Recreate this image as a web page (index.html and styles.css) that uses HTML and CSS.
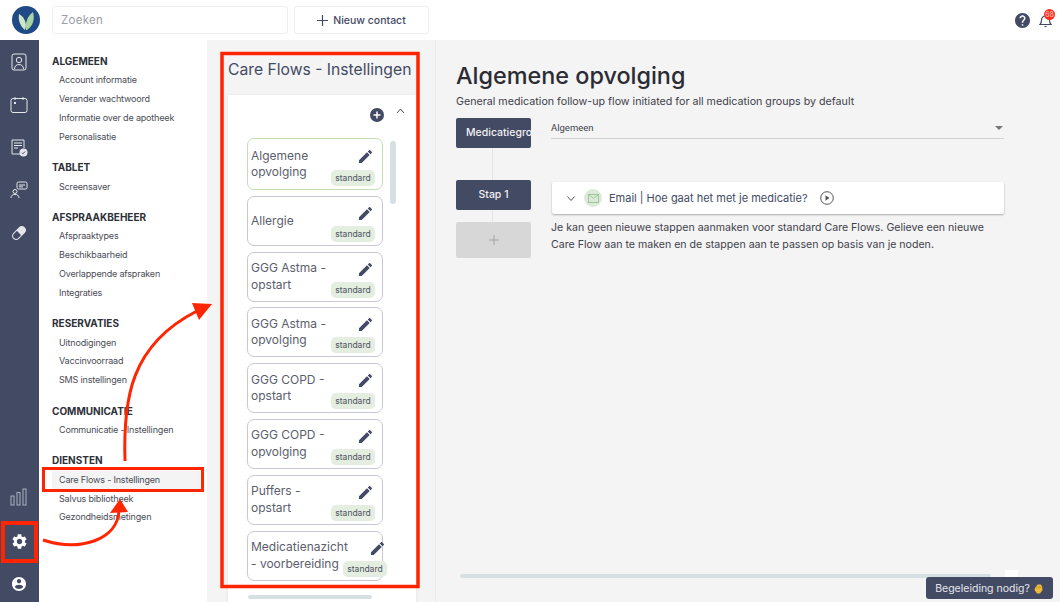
FILE: index.html
```html
<!DOCTYPE html>
<html lang="en">
<head>
    <meta charset="UTF-8">
    <meta name="viewport" content="width=device-width, initial-scale=1.0">
    <title>Care Flows - Instellingen</title>
    <link rel="stylesheet" href="styles.css">
</head>
<body>
    <!-- Top bar -->
    <header class="topbar">
        <div class="logo">
            <svg width="28" height="28" viewBox="0 0 28 28">
                <circle cx="14" cy="14" r="14" fill="#1f4a86"></circle>
                <path d="M13 24C8 20 6 14 7 8c4 2 7 7 7 12z" fill="#cfe6c8"></path>
                <path d="M14 24c-1-6 1-14 7-18 2 7 0 14-6 18z" fill="#a9d3a2"></path>
            </svg>
        </div>
        <div class="search">Zoeken</div>
        <button class="new-contact">
            <svg width="11" height="11" viewBox="0 0 11 11"><path d="M5.500 0v11M0 5.500h11" stroke="#434a63" stroke-width="1.200"></path></svg>
            Nieuw contact
        </button>
        <div class="topbar-right">
            <svg class="help-icon" width="15" height="15" viewBox="2 2 20 20"><path fill="#434a63" d="M12 2C6.480 2 2 6.480 2 12s4.480 10 10 10 10-4.480 10-10S17.520 2 12 2zm1 17h-2v-2h2v2zm2.070-7.750l-.9.920C13.450 12.900 13 13.500 13 15h-2v-.5c0-1.100.450-2.100 1.170-2.830l1.240-1.260c.370-.360.590-.860.590-1.410 0-1.100-.9-2-2-2s-2 .9-2 2H8c0-2.210 1.790-4 4-4s4 1.790 4 4c0 .880-.360 1.680-.930 2.250z"></path></svg>
            <div class="bell">
                <svg width="13" height="15" viewBox="0 0 13 15" fill="none" stroke="#434a63" stroke-width="1.200"><path d="M1 11.500c1.200-1 1.500-2 1.500-4.500a4 4 0 0 1 8 0c0 2.500.3 3.500 1.500 4.500z"></path><path d="M5.500 13.500h2"></path></svg>
                <span class="badge">68</span>
            </div>
        </div>
    </header>

    <div class="layout">
        <!-- Icon sidebar -->
        <aside class="sidebar">
            <div class="sidebar-group">
                <svg width="18" height="18" viewBox="0 0 18 18" fill="none" stroke="#e4e6ec" stroke-width="1"><rect x="2" y="1" width="14" height="16" rx="2"></rect><circle cx="9" cy="7" r="2.700"></circle><path d="M4.500 16c0-3 2-4.500 4.500-4.500s4.500 1.500 4.500 4.500"></path></svg>
                <svg width="18" height="18" viewBox="0 0 18 18" fill="none" stroke="#e4e6ec" stroke-width="1"><rect x="1" y="2.500" width="16" height="14" rx="2"></rect><path d="M5 1v3M13 1v3"></path><rect x="4" y="6" width="2" height="2" fill="#e4e6ec" stroke="none"></rect></svg>
                <svg width="18" height="18" viewBox="0 0 18 18" fill="none" stroke="#e4e6ec" stroke-width="1"><path d="M11 15H2V1h12v8"></path><path d="M4 4h8M4 6.500h8M4 9h4"></path><circle cx="13.500" cy="13.500" r="4" fill="#e4e6ec" stroke="none"></circle><path d="M12 13.800l1 1 2-2.300" stroke="#434a63"></path></svg>
                <svg width="18" height="18" viewBox="0 0 18 18" fill="none" stroke="#e4e6ec" stroke-width="1"><rect x="7" y="1" width="10" height="7" rx="1.500"></rect><path d="M9 4h6M9 5.800h4"></path><circle cx="5" cy="10.500" r="2"></circle><path d="M1 17c0-2.500 1.500-3.500 4-3.500s4 1 4 3.500"></path></svg>
                <svg width="18" height="18" viewBox="0 0 18 18" fill="none" stroke="#e4e6ec" stroke-width="1"><g transform="rotate(-45 9 9)"><rect x="1.500" y="5.500" width="15" height="7" rx="3.500"></rect><path d="M9 5.500h4a3.500 3.500 0 0 1 0 7H9z" fill="#e4e6ec" stroke="none"></path></g></svg>
            </div>
            <div class="sidebar-group sidebar-bottom">
                <svg width="18" height="18" viewBox="0 0 18 18" fill="none" stroke="#aab0c0" stroke-width="1"><rect x="1" y="8" width="3" height="9"></rect><rect x="7" y="4.500" width="3" height="12.500"></rect><rect x="13" y="1" width="3" height="16"></rect></svg>
                <svg width="15" height="15" viewBox="2 2 20 20"><path fill="#fff" d="M19.140 12.940c.04-.3.06-.61.06-.94 0-.32-.02-.64-.07-.94l2.030-1.580c.18-.14.23-.41.12-.61l-1.920-3.320c-.12-.22-.37-.29-.59-.22l-2.390.96c-.5-.38-1.030-.7-1.620-.94l-.36-2.540c-.04-.24-.24-.41-.48-.41h-3.840c-.24 0-.43.17-.47.41l-.36 2.540c-.59.24-1.130.57-1.620.94l-2.390-.96c-.22-.08-.47 0-.59.22L2.740 8.870c-.12.21-.08.47.12.61l2.030 1.580c-.05.3-.09.63-.09.94s.02.64.07.94l-2.030 1.580c-.18.14-.23.41-.12.61l1.920 3.320c.12.22.37.29.59.22l2.390-.96c.5.38 1.030.7 1.620.94l.36 2.540c.05.24.24.41.48.41h3.840c.24 0 .44-.17.47-.41l.36-2.540c.59-.24 1.130-.56 1.620-.94l2.390.96c.22.08.47 0 .59-.22l1.920-3.320c.12-.22.07-.47-.12-.61l-2.010-1.580zM12 15.600c-1.980 0-3.600-1.620-3.600-3.600s1.620-3.600 3.600-3.600 3.600 1.620 3.600 3.600-1.620 3.600-3.600 3.600z"></path></svg>
                <svg width="14" height="14" viewBox="2 2 20 20"><path fill="#fff" d="M12 2C6.480 2 2 6.480 2 12s4.480 10 10 10 10-4.480 10-10S17.520 2 12 2zm0 3c1.660 0 3 1.340 3 3s-1.340 3-3 3-3-1.340-3-3 1.340-3 3-3zm0 14.200c-2.500 0-4.710-1.280-6-3.220.03-1.990 4-3.080 6-3.080 1.990 0 5.970 1.090 6 3.080-1.290 1.940-3.500 3.220-6 3.220z"></path></svg>
            </div>
        </aside>

        <!-- Settings menu -->
        <nav class="settings-nav">
            <div class="nav-group">
                <h4>ALGEMEEN</h4>
                <a>Account informatie</a>
                <a>Verander wachtwoord</a>
                <a>Informatie over de apotheek</a>
                <a>Personalisatie</a>
            </div>
            <div class="nav-group">
                <h4>TABLET</h4>
                <a>Screensaver</a>
            </div>
            <div class="nav-group">
                <h4>AFSPRAAKBEHEER</h4>
                <a>Afspraaktypes</a>
                <a>Beschikbaarheid</a>
                <a>Overlappende afspraken</a>
                <a>Integraties</a>
            </div>
            <div class="nav-group">
                <h4>RESERVATIES</h4>
                <a>Uitnodigingen</a>
                <a>Vaccinvoorraad</a>
                <a>SMS instellingen</a>
            </div>
            <div class="nav-group">
                <h4>COMMUNICATIE</h4>
                <a>Communicatie - Instellingen</a>
            </div>
            <div class="nav-group">
                <h4>DIENSTEN</h4>
                <a class="active">Care Flows - Instellingen</a>
                <a>Salvus bibliotheek</a>
                <a>Gezondheidsmetingen</a>
            </div>
        </nav>

        <!-- Care flow list -->
        <section class="flows">
            <h2>Care Flows - Instellingen</h2>
            <div class="flows-card">
                <div class="flows-tools">
                    <svg width="14" height="14" viewBox="0 0 14 14"><circle cx="7" cy="7" r="7" fill="#434a63"></circle><path d="M7 3.500v7M3.500 7h7" stroke="#fff" stroke-width="1.500"></path></svg>
                    <svg width="9" height="6" viewBox="0 0 9 6" fill="none" stroke="#555" stroke-width="1"><path d="M1 5l3.500-4L8 5"></path></svg>
                </div>
                <div class="flows-list">
                    <div class="flow selected">
                        <span class="flow-name">Algemene opvolging</span>
                        <svg class="pencil" viewBox="3 3 18 18"><path d="M3 17.250V21h3.750L17.810 9.940l-3.750-3.750L3 17.250zM20.710 7.040c.39-.39.39-1.020 0-1.410l-2.340-2.340c-.39-.39-1.020-.39-1.410 0l-1.830 1.830 3.750 3.750 1.830-1.830z"></path></svg>
                        <span class="tag">standard</span>
                    </div>
                    <div class="flow">
                        <span class="flow-name">Allergie</span>
                        <svg class="pencil" viewBox="3 3 18 18"><path d="M3 17.250V21h3.750L17.810 9.940l-3.750-3.750L3 17.250zM20.710 7.040c.39-.39.39-1.020 0-1.410l-2.340-2.340c-.39-.39-1.020-.39-1.410 0l-1.830 1.830 3.750 3.750 1.830-1.830z"></path></svg>
                        <span class="tag">standard</span>
                    </div>
                    <div class="flow">
                        <span class="flow-name">GGG Astma - opstart</span>
                        <svg class="pencil" viewBox="3 3 18 18"><path d="M3 17.250V21h3.750L17.810 9.940l-3.750-3.750L3 17.250zM20.710 7.040c.39-.39.39-1.020 0-1.410l-2.340-2.340c-.39-.39-1.020-.39-1.410 0l-1.830 1.830 3.750 3.750 1.830-1.830z"></path></svg>
                        <span class="tag">standard</span>
                    </div>
                    <div class="flow">
                        <span class="flow-name">GGG Astma - opvolging</span>
                        <svg class="pencil" viewBox="3 3 18 18"><path d="M3 17.250V21h3.750L17.810 9.940l-3.750-3.750L3 17.250zM20.710 7.040c.39-.39.39-1.020 0-1.410l-2.340-2.340c-.39-.39-1.020-.39-1.410 0l-1.830 1.830 3.750 3.750 1.830-1.830z"></path></svg>
                        <span class="tag">standard</span>
                    </div>
                    <div class="flow">
                        <span class="flow-name">GGG COPD - opstart</span>
                        <svg class="pencil" viewBox="3 3 18 18"><path d="M3 17.250V21h3.750L17.810 9.940l-3.750-3.750L3 17.250zM20.710 7.040c.39-.39.39-1.020 0-1.410l-2.340-2.340c-.39-.39-1.020-.39-1.410 0l-1.830 1.830 3.750 3.750 1.830-1.830z"></path></svg>
                        <span class="tag">standard</span>
                    </div>
                    <div class="flow">
                        <span class="flow-name">GGG COPD - opvolging</span>
                        <svg class="pencil" viewBox="3 3 18 18"><path d="M3 17.250V21h3.750L17.810 9.940l-3.750-3.750L3 17.250zM20.710 7.040c.39-.39.39-1.020 0-1.410l-2.340-2.340c-.39-.39-1.020-.39-1.410 0l-1.830 1.830 3.750 3.750 1.830-1.830z"></path></svg>
                        <span class="tag">standard</span>
                    </div>
                    <div class="flow">
                        <span class="flow-name">Puffers - opstart</span>
                        <svg class="pencil" viewBox="3 3 18 18"><path d="M3 17.250V21h3.750L17.810 9.940l-3.750-3.750L3 17.250zM20.710 7.040c.39-.39.39-1.020 0-1.410l-2.340-2.340c-.39-.39-1.020-.39-1.410 0l-1.830 1.830 3.750 3.750 1.830-1.830z"></path></svg>
                        <span class="tag">standard</span>
                    </div>
                    <div class="flow long">
                        <span class="flow-name">Medicatienazicht - voorbereiding</span>
                        <svg class="pencil" viewBox="3 3 18 18"><path d="M3 17.250V21h3.750L17.810 9.940l-3.750-3.750L3 17.250zM20.710 7.040c.39-.39.39-1.020 0-1.410l-2.340-2.340c-.39-.39-1.020-.39-1.410 0l-1.830 1.830 3.750 3.750 1.830-1.830z"></path></svg>
                        <span class="tag">standard</span>
                    </div>
                </div>
                <div class="scroll-v"></div>
                <div class="scroll-h"></div>
            </div>
        </section>

        <!-- Flow detail -->
        <main class="detail">
            <h1>Algemene opvolging</h1>
            <p class="subtitle">General medication follow-up flow initiated for all medication groups by default</p>
            <div class="flow-steps">
                <div class="step-line"></div>
                <div class="step-row group-row">
                    <div class="step-btn">Medicatiegroep</div>
                    <div class="select">
                        <span>Algemeen</span>
                        <span class="caret"></span>
                    </div>
                </div>
                <div class="step-row">
                    <div class="step-btn">Stap 1</div>
                    <div class="step-card">
                        <svg width="8" height="5" viewBox="0 0 8 5" fill="none" stroke="#555" stroke-width="1"><path d="M.5.500L4 4.500 7.500.500"></path></svg>
                        <span class="mail-icon">
                            <svg width="11" height="9" viewBox="0 0 11 9" fill="none" stroke="#9cc79a" stroke-width="1"><rect x=".5" y=".5" width="10" height="8"></rect><path d="M.5.500l5 4 5-4"></path></svg>
                        </span>
                        <span class="step-title">Email | Hoe gaat het met je medicatie?</span>
                        <svg width="14" height="14" viewBox="0 0 14 14" fill="none" stroke="#555" stroke-width="1"><circle cx="7" cy="7" r="6.300"></circle><path d="M5.500 4.300L9.500 7l-4 2.700z" fill="#555" stroke="none"></path></svg>
                    </div>
                </div>
                <div class="step-row add-row">
                    <div class="step-add">
                        <svg width="10" height="10" viewBox="0 0 10 10"><path d="M5 0v10M0 5h10" stroke="#a5a5a5" stroke-width="1"></path></svg>
                    </div>
                    <p class="step-note">Je kan geen nieuwe stappen aanmaken voor standard Care Flows. Gelieve een nieuwe Care Flow aan te maken en de stappen aan te passen op basis van je noden.</p>
                </div>
            </div>
            <div class="detail-scroll"></div>
        </main>
    </div>

    <div class="help-tab"></div>
    <button class="guidance">Begeleiding nodig?
        <svg width="11" height="11" viewBox="0 0 11 11"><path d="M2 5l3-4 1 1 1-1 1 1 1 1 .5 4-2.500 3.500H4L1.500 7z" fill="#f0b93a"></path><path d="M4.500 3.500l-1 2M6.500 3l-1 2.500M8 3.500L7 5.500" stroke="#b98415" stroke-width=".6"></path></svg>
    </button>

    <!-- Red tutorial markings drawn over the page -->
    <svg class="markings" width="1060" height="602" viewBox="0 0 1060 602" fill="none">
        <rect x="222" y="53.500" width="196" height="533" stroke="#ff2500" stroke-width="3.500"></rect>
        <rect x="43.500" y="468.500" width="159" height="22" stroke="#ff2500" stroke-width="3"></rect>
        <rect x="3" y="523" width="33" height="38" stroke="#ff2500" stroke-width="4"></rect>
        <path d="M125 461C123 400 130 345 197 311" stroke="#ff2500" stroke-width="3"></path>
        <path d="M192 303L212 304 199 320z" fill="#ff2500"></path>
        <path d="M43 540C80 552 118 540 119 510" stroke="#ff2500" stroke-width="3"></path>
        <path d="M120 499L110 513 128 512z" fill="#ff2500"></path>
    </svg>
</body>
</html>
```

FILE: styles.css
```css
* {
    box-sizing: border-box;
}

body {
    margin: 0;
    width: 1060px;
    height: 602px;
    overflow: hidden;
    position: relative;
    font-family: Inter, "Open Sans", sans-serif;
    color: #3c3f4c;
    background-color: #f4f4f4;
}

h1, h2, h4, p {
    margin: 0;
}

/* Top bar */
.topbar {
    height: 40px;
    background-color: white;
    display: flex;
    align-items: center;
}

.logo {
    width: 52px;
    padding-left: 12px;
    display: flex;
}

.search {
    width: 236px;
    height: 28px;
    border: 1px solid #eeeef0;
    border-radius: 3px;
    padding-left: 8px;
    font-size: 11.5px;
    line-height: 27px;
    letter-spacing: 0.3px;
    color: #9a9ca6;
}

.new-contact {
    width: 135px;
    height: 28px;
    margin-left: 6px;
    background-color: white;
    border: 1px solid #eeeef0;
    border-radius: 3px;
    font-family: inherit;
    font-size: 10.5px;
    font-weight: 500;
    color: #434a63;
    display: flex;
    align-items: center;
    justify-content: center;
    gap: 5px;
}

.topbar-right {
    margin-left: auto;
    padding-right: 8px;
    display: flex;
    align-items: center;
    gap: 9px;
}

.bell {
    position: relative;
    display: flex;
}

.badge {
    position: absolute;
    top: -4px;
    left: 5px;
    width: 11px;
    height: 11px;
    border-radius: 50%;
    background-color: #ff2d20;
    color: #ffc9c4;
    font-size: 7px;
    line-height: 11px;
    text-align: center;
}

/* Page columns */
.layout {
    display: flex;
    height: 562px;
}

.sidebar {
    width: 39px;
    background-color: #434a63;
    display: flex;
    flex-direction: column;
    justify-content: space-between;
    align-items: center;
    padding: 13px 1px 11px 0;
}

.sidebar-group {
    display: flex;
    flex-direction: column;
    align-items: center;
    gap: 24.75px;
}

.sidebar-bottom {
    gap: 28px;
}

.settings-nav {
    width: 168px;
    background-color: white;
    padding: 12px 7px 0 13px;
}

.nav-group {
    margin-bottom: 11.6px;
}

.nav-group h4 {
    font-size: 10px;
    font-weight: 700;
    line-height: 19.4px;
    color: #2e3038;
}

.nav-group a {
    display: block;
    height: 18.8px;
    padding-left: 7px;
    font-size: 9px;
    line-height: 18.8px;
    color: #4a4c55;
    letter-spacing: -0.17px;
}

.nav-group a.active {
    background-color: #f4f4f4;
}

/* Care flow list */
.flows {
    width: 229px;
    padding: 20px 19px 0 21px;
    border-right: 1px solid #ebebeb;
    overflow: hidden;
}

.flows h2 {
    font-size: 15.7px;
    font-weight: 400;
    line-height: 20px;
    color: #434a63;
    white-space: nowrap;
}

.flows-card {
    position: relative;
    width: 188px;
    height: 520px;
    margin-top: 15px;
    background-color: white;
    box-shadow: 0 0 3px rgba(0, 0, 0, 0.08);
    padding: 13px 0 0 19px;
}

.flows-tools {
    width: 158px;
    height: 16px;
    display: flex;
    justify-content: flex-end;
    align-items: flex-start;
    gap: 12px;
    margin-bottom: 14px;
}

.flows-list {
    display: flex;
    flex-direction: column;
    gap: 5.8px;
}

.flow {
    position: relative;
    width: 136px;
    height: 50px;
    flex-shrink: 0;
    border: 1px solid #c9c8d2;
    border-radius: 7px;
    padding: 0 46px 0 3px;
    display: flex;
    align-items: center;
    font-size: 12px;
    line-height: 16.5px;
    color: #5b5e6c;
}

.flow.selected {
    height: 52px;
    border-color: #c7dcb9;
}

.flow.selected .pencil {
    top: 11px;
}

.flow.long {
    padding-right: 0;
}

.flow.long .flow-name {
    width: 100px;
    white-space: normal;
}

.flow.long .pencil {
    left: 123px;
}

.flow.long .tag {
    left: 95px;
    right: auto;
}

.pencil {
    position: absolute;
    top: 10px;
    left: 111px;
    width: 13px;
    height: 13px;
    fill: #434a63;
}

.tag {
    position: absolute;
    right: 7px;
    bottom: 3px;
    width: 44px;
    height: 16px;
    border-radius: 5px;
    background-color: #e3ede0;
    font-size: 8.5px;
    line-height: 16px;
    text-align: center;
    color: #4f5260;
}

.scroll-v {
    position: absolute;
    top: 46px;
    left: 162px;
    width: 6px;
    height: 63px;
    border-radius: 3px;
    background-color: #d6e0e2;
}

.scroll-h {
    position: absolute;
    top: 500px;
    left: 20px;
    width: 124px;
    height: 4px;
    border-radius: 2px;
    background-color: #d6e0e2;
}

/* Flow detail */
.detail {
    position: relative;
    flex: 1;
    padding: 22px 0 0 20px;
}

.detail h1 {
    font-size: 23.4px;
    font-weight: 500;
    line-height: 28px;
    color: #2b2c33;
}

.subtitle {
    margin-top: 5px;
    font-size: 10.7px;
    line-height: 14px;
    color: #3f414b;
}

.flow-steps {
    position: relative;
    width: 548px;
    margin-top: 9px;
}

.step-line {
    position: absolute;
    top: 30px;
    left: 36px;
    width: 1px;
    height: 100px;
    background-color: #e4e4e4;
}

.step-row {
    position: relative;
    display: flex;
    gap: 20px;
}

.group-row {
    height: 62px;
}

.step-btn {
    width: 75px;
    height: 30px;
    flex-shrink: 0;
    background-color: #434a63;
    border-radius: 2px;
    color: #f1f1f4;
    font-size: 10.5px;
    font-weight: 500;
    line-height: 30px;
    text-align: center;
    white-space: nowrap;
}

.group-row .step-btn {
    padding-left: 10px;
    text-align: left;
}

.select {
    width: 453px;
    height: 21px;
    border-bottom: 1px solid #d2d2d2;
    font-family: Roboto, sans-serif;
    font-size: 9.5px;
    line-height: 20px;
    display: flex;
    justify-content: space-between;
    align-items: center;
    color: #3f414b;
}

.caret {
    width: 0;
    height: 0;
    margin-right: 1px;
    border-left: 4px solid transparent;
    border-right: 4px solid transparent;
    border-top: 4px solid #777;
}

.step-card {
    width: 452px;
    height: 32px;
    margin: 2px 0 0 1px;
    background-color: white;
    border-radius: 2px;
    box-shadow: 0 1px 2px rgba(0, 0, 0, 0.3);
    padding-left: 15px;
    display: flex;
    align-items: center;
}

.mail-icon {
    width: 18px;
    height: 18px;
    margin-left: 9px;
    border-radius: 50%;
    background-color: #dcebd9;
    display: flex;
    align-items: center;
    justify-content: center;
}

.step-title {
    margin: 0 12px 0 7px;
    font-size: 11px;
    font-weight: 400;
    color: #434a63;
}

.add-row {
    margin-top: 8px;
}

.step-add {
    width: 75px;
    height: 36px;
    flex-shrink: 0;
    background-color: #d7d7d7;
    border-radius: 2px;
    display: flex;
    align-items: center;
    justify-content: center;
}

.step-note {
    width: 450px;
    margin-top: -3px;
    font-size: 10.6px;
    line-height: 17px;
    color: #3f414b;
}

.detail-scroll {
    position: absolute;
    top: 534px;
    left: 24px;
    width: 531px;
    height: 4px;
    border-radius: 2px;
    background-color: #d6e0e2;
}

/* Floating items */
.help-tab {
    position: absolute;
    top: 570px;
    left: 1005px;
    width: 13px;
    height: 8px;
    background-color: white;
}

.guidance {
    position: absolute;
    top: 577px;
    left: 926px;
    width: 127px;
    height: 22px;
    border: none;
    border-radius: 3px;
    background-color: #434a63;
    color: #e6e7ec;
    font-family: inherit;
    font-size: 10.5px;
    display: flex;
    align-items: center;
    justify-content: center;
    gap: 3px;
}

.markings {
    position: absolute;
    top: 0;
    left: 0;
}
```
